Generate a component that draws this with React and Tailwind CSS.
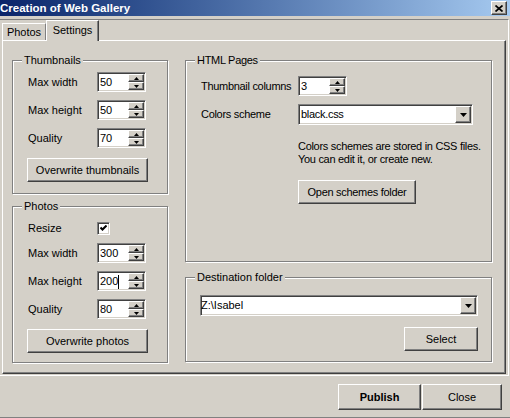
const raised = 'border border-t-white border-l-white border-r-[#404040] border-b-[#404040] shadow-[inset_-1px_-1px_0_#808080] bg-[#d4d0c8]'
const sunken = 'border border-t-[#808080] border-l-[#808080] border-r-white border-b-white shadow-[inset_1px_1px_0_#404040,inset_-1px_-1px_0_#d4d0c8] bg-white'

function Button({ children, className = '', bold }) {
  return (
    <div className={`${raised} flex items-center justify-center ${bold ? 'font-bold' : ''} ${className}`}>
      {children}
    </div>
  )
}

function Arrow({ dir }) {
  return (
    <svg width="5" height="3" viewBox="0 0 5 3">
      {dir === 'up' ? <polygon points="2.5,0 5,3 0,3" fill="#000" /> : <polygon points="0,0 5,0 2.5,3" fill="#000" />}
    </svg>
  )
}

function Spin({ value, cursor }) {
  return (
    <div className={`${sunken} w-[49px] h-[20px] flex tracking-normal`}>
      <div className="flex-1 flex items-center pl-[2px] pt-px">
        {value}
        {cursor && <span className="w-px h-[14px] bg-black" />}
      </div>
      <div className="flex flex-col w-[16px] my-px mr-px">
        <div className={`${raised} h-[8px] flex items-center justify-center`}><Arrow dir="up" /></div>
        <div className={`${raised} h-[8px] flex items-center justify-center`}><Arrow dir="down" /></div>
      </div>
    </div>
  )
}

function Combo({ value, className = '', textPad = 'pl-[2px]' }) {
  return (
    <div className={`${sunken} h-[21px] flex ${className}`}>
      <div className={`flex-1 flex items-center ${textPad}`}>{value}</div>
      <div className={`${raised} w-[16px] my-px mr-px flex items-center justify-center`}>
        <svg width="7" height="4" viewBox="0 0 7 4"><polygon points="0,0 7,0 3.5,4" fill="#000" /></svg>
      </div>
    </div>
  )
}

function Group({ title, className = '', children }) {
  return (
    <div className={`relative border border-[#808080] shadow-[inset_1px_1px_0_#fff,1px_1px_0_#fff] ${className}`}>
      <span className="absolute -top-[7px] left-[9px] px-[2px] bg-[#d4d0c8] whitespace-nowrap">{title}</span>
      {children}
    </div>
  )
}

function SpinRow({ label, value, cursor, labelW = 'w-[69px]' }) {
  return (
    <div className="flex items-center h-[20px]">
      <span className={`${labelW} whitespace-nowrap`}>{label}</span>
      <Spin value={value} cursor={cursor} />
    </div>
  )
}

export default function App() {
  return (
    <div className="w-[510px] h-[418px] bg-[#d4d0c8] flex flex-col overflow-hidden border-b border-[#808080] font-['Liberation_Sans',Arial,sans-serif] text-[11px] leading-[13px] text-black">
      {/* title bar */}
      <div className="h-[16px] shrink-0 flex items-start justify-between bg-linear-to-r from-[#0a246a] to-[#a6caf0]">
        <span className="text-white font-bold text-[11.5px] leading-[16px] whitespace-nowrap">Creation of Web Gallery</span>
        <div className={`${raised} mt-px mr-[3px] w-[16px] h-[14px] flex items-center justify-center`}>
          <svg width="8" height="7" viewBox="0 0 8 7">
            <path d="M0.5 0.5 L7.5 6.5 M7.5 0.5 L0.5 6.5" stroke="#000" strokeWidth="1.7" />
          </svg>
        </div>
      </div>

      {/* tab frame */}
      <div className="mt-[3px] w-[509px] h-[357px] shrink-0 border-t border-r border-b border-t-[#808080] border-r-white border-b-white pl-[2px] flex flex-col">
        <div className="h-[20px] flex items-end">
          <div className="w-[44px] h-[17px] border-t border-l border-r border-t-white border-l-white border-r-[#808080] flex items-center justify-center">
            Photos
          </div>
          <div className="relative z-10 -mb-px w-[53px] h-[21px] bg-[#d4d0c8] border-t border-l border-r border-t-white border-l-white border-r-[#404040] shadow-[inset_-1px_0_0_#808080] flex items-center justify-center pb-px">
            Settings
          </div>
        </div>

        <div className="w-[504px] h-[334px] border border-t-white border-l-white border-r-[#404040] border-b-[#404040] shadow-[inset_-1px_-1px_0_#808080] flex gap-[17px] pl-[9px] pt-[19px]">
          {/* left column */}
          <div className="w-[156px] flex flex-col">
            <Group title="Thumbnails" className="h-[134px] pt-[11px] pl-[15px] flex flex-col gap-[8px]">
              <SpinRow label="Max width" value="50" />
              <SpinRow label="Max height" value="50" />
              <SpinRow label="Quality" value="70" />
              <Button className="-ml-px mt-[2px] w-[121px] h-[24px]">Overwrite thumbnails</Button>
            </Group>

            <Group title="Photos" className="mt-[12px] h-[157px] pt-[15px] pl-[15px] flex flex-col gap-[8px]">
              <div className="flex items-center h-[13px]">
                <span className="w-[69px]">Resize</span>
                <div className={`${sunken} w-[13px] h-[13px] flex items-center justify-center`}>
                  <svg width="7" height="7" viewBox="0 0 7 7">
                    <path d="M0.5 2.5 L2.5 4.5 L6.5 0.5" stroke="#000" strokeWidth="2" fill="none" />
                  </svg>
                </div>
              </div>
              <SpinRow label="Max width" value="300" />
              <SpinRow label="Max height" value="200" cursor />
              <SpinRow label="Quality" value="80" />
              <Button className="-ml-px mt-[2px] w-[121px] h-[24px]">Overwrite photos</Button>
            </Group>
          </div>

          {/* right column */}
          <div className="w-[307px] flex flex-col">
            <Group title="HTML Pages" className="h-[202px] pt-[15px] pl-[15px] flex flex-col tracking-[-0.3px]">
              <SpinRow label="Thumbnail columns" value="3" labelW="w-[97px]" />
              <div className="mt-[8px] flex items-center h-[21px]">
                <span className="w-[97px]">Colors scheme</span>
                <Combo value="black.css" className="w-[175px]" />
              </div>
              <div className="ml-[97px] mt-[15px] whitespace-nowrap">
                <div>Colors schemes are stored in CSS files.</div>
                <div>You can edit it, or create new.</div>
              </div>
              <Button className="ml-[97px] mt-[14px] w-[118px] h-[24px]">Open schemes folder</Button>
            </Group>

            <Group title="Destination folder" className="mt-[15px] h-[85px] pt-[17px] pl-[14px]">
              <div className="w-[278px] flex flex-col items-end">
                <Combo value={'Z:\\Isabel'} className="w-[278px]" textPad="pl-0" />
                <Button className="mt-[11px] w-[74px] h-[24px]">Select</Button>
              </div>
            </Group>
          </div>
        </div>
      </div>

      {/* bottom buttons */}
      <div className="flex-1 flex justify-end items-start pt-[8px] pr-[8px] gap-px">
        <Button bold className="w-[83px] h-[26px]">Publish</Button>
        <Button className="w-[80px] h-[26px]">Close</Button>
      </div>
    </div>
  )
}
